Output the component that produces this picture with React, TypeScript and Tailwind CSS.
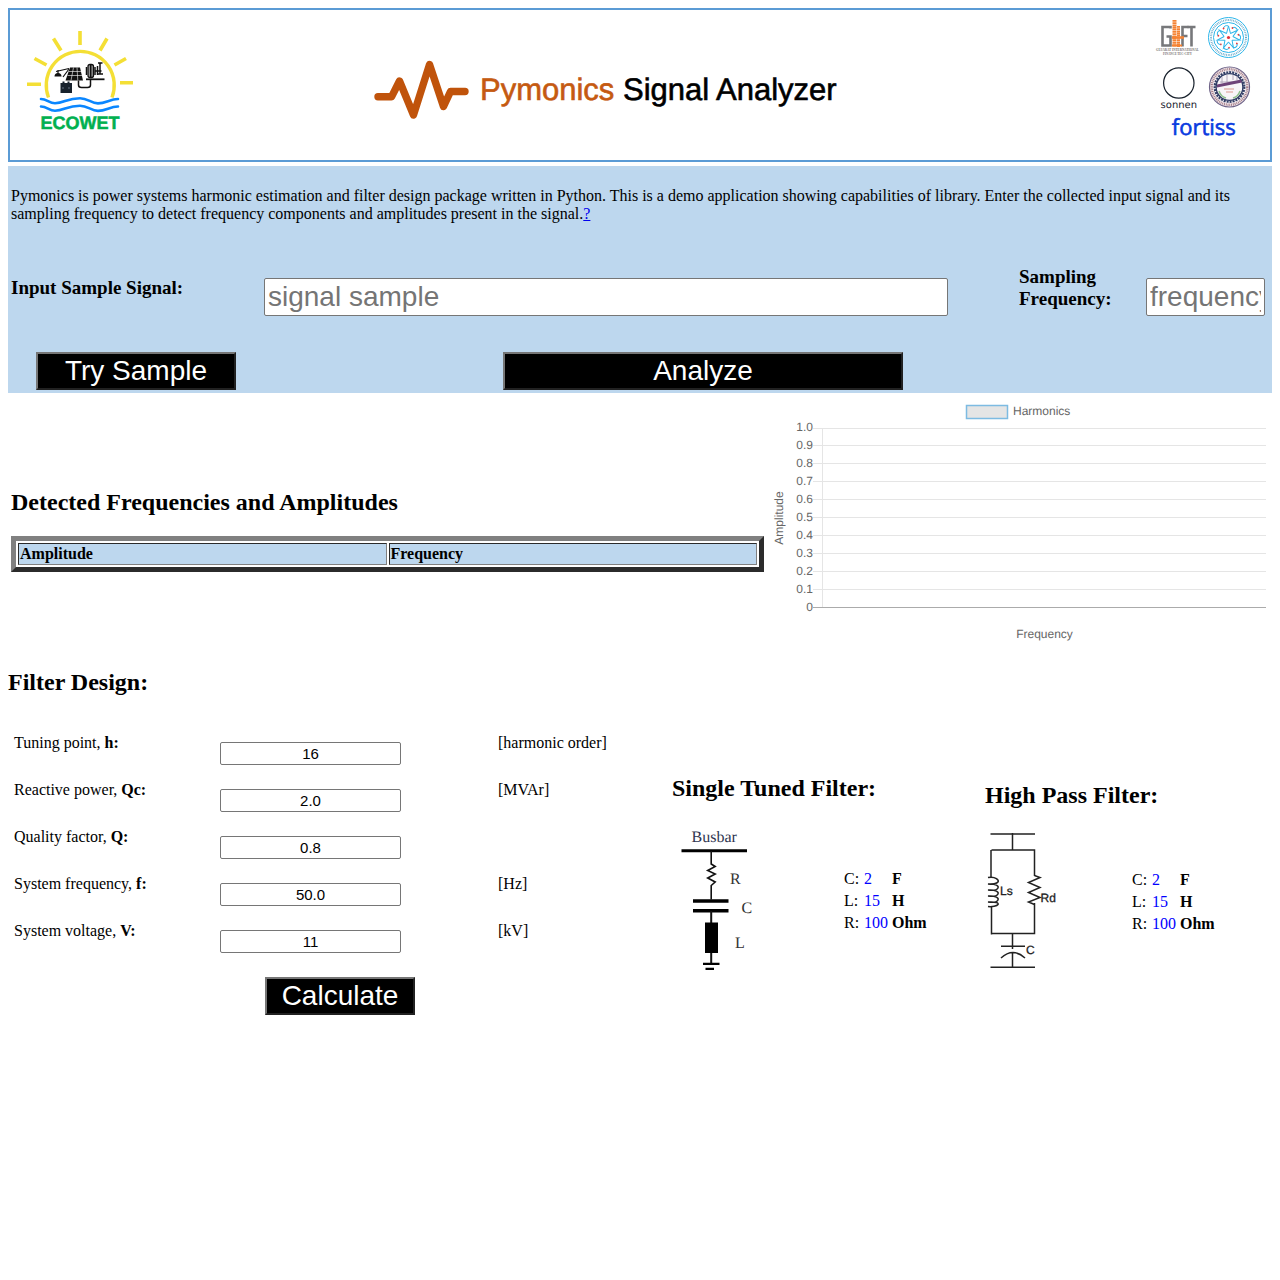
import React from "react";

const serif = "font-['Liberation_Serif',serif]";
const sans = "font-['Liberation_Sans',sans-serif]";

const buttonClass =
  "h-[38px] border-2 border-t-[#767676] border-l-[#767676] border-r-[#212121] border-b-[#212121] bg-black text-center font-['Liberation_Sans',sans-serif] text-[28px] leading-[32px] text-white";
const bigInputClass =
  "h-[38px] w-full rounded-[2px] border border-[#767676] bg-white px-[3px] font-['Liberation_Sans',sans-serif] text-[28px] leading-[32px] text-black placeholder:text-[#757575]";

function EcowetLogo() {
  return (
    <svg width="112" height="106" viewBox="24 26 112 106" role="img" aria-label="Ecowet">
      <g fill="none" stroke="#f4df35" strokeWidth="3.6">
        <path d="M80 31v14M53.5 38.500l7.500 12M107 38.500l-7 12M34.500 58.500l12 6.500M126 58.500l-11.500 6.500M27 84.300h14M120 82.700h13" />
        <path d="M48.500 97.500A34 34 0 1 1 112 97.500" strokeWidth="3.400" />
      </g>
      <g fill="none" stroke="#0a86ff" strokeWidth="2.600" strokeLinecap="round">
        <path d="M41 99c6 0 8 4.200 14 4.200 9 0 12-5 25-5 8 0 11 5.200 18 5.200 8 0 12-4.400 20-4.400" />
        <path d="M41 106.500c6 0 8 4.200 14 4.200 9 0 12-5 25-5 8 0 11 5.200 18 5.200 8 0 12-4.400 20-4.400" />
      </g>
      <path d="M70 67.500h10l3 13H65.500z" fill="#111" />
      <path d="M68.800 71.500h13M67.500 75.500h15M73.500 67.500l-2.500 13M77 67.500l.8 13" stroke="#fff" strokeWidth=".6" />
      <path d="M56 71.500l13-3M58 70v4M69 69l-6 8" fill="none" stroke="#111" strokeWidth="1.200" />
      <path d="M54.500 76.500a3.500 3.500 0 0 1 7 0z" fill="#111" />
      <path d="M60.500 83h2v-1.500h2V83h3v-1.500h2V83h2.500v10H60.500z" fill="#17222d" />
      <path d="M62 88h2m4 0h2" stroke="#9ab" strokeWidth=".6" />
      <path d="M78.500 80.500V85q0 2.500 3 2.500h6q3 0 3-2.500v-5.500" fill="none" stroke="#111" strokeWidth="1.500" />
      <path d="M86 79.300h18.500" stroke="#111" strokeWidth="1.800" />
      <rect x="88" y="64.500" width="5.500" height="13" rx="2" fill="#999" stroke="#111" strokeWidth="1.300" />
      <path d="M86.500 67v8M90.700 65v12M95 67v8M95.500 71h6M97.500 66v9M100 62.500v11.500M98 63h4.500M97 74h6" fill="none" stroke="#111" strokeWidth="1.500" />
      <text x="40.500" y="128.500" fontSize="18" fontWeight="700" fill="#00b050" stroke="#00b050" strokeWidth=".5" textRendering="geometricPrecision" className={sans}>
        ECOWET
      </text>
    </svg>
  );
}

function PymonicsLogo() {
  return (
    <svg width="468" height="68" viewBox="372 56 468 68" role="img" aria-label="Pymonics Signal Analyzer">
      <path
        d="M378 96.800h13.500l8-15.800 14 34 16-50.500 14 42 7-15H465"
        fill="none"
        stroke="#c0530b"
        strokeWidth="7.400"
        strokeLinecap="round"
        strokeLinejoin="round"
      />
      <text x="480" y="100" fontSize="31" strokeWidth=".6" textRendering="geometricPrecision" className={sans}>
        <tspan fill="#c55a11" stroke="#c55a11">Pymonics</tspan>
        <tspan fill="#000" stroke="#000"> Signal Analyzer</tspan>
      </text>
    </svg>
  );
}

function PartnerLogos() {
  const spokes = [0, 51.43, 102.86, 154.29, 205.71, 257.14, 308.57];
  return (
    <svg width="102" height="132" viewBox="1152 14 102 132" role="img" aria-label="Partners">
      <g fill="none" stroke="#77787b" strokeWidth="2.600">
        <path d="M1170.500 28.500v-1.500h-8v18.500h8v-9h-4" />
        <path d="M1182.500 46.500V27h6M1182.500 36h5" />
        <path d="M1187.500 27h8M1191.500 27v19.500" />
      </g>
      <g stroke="#f58233" fill="none">
        <path d="M1174.500 20v27" strokeWidth="4" strokeDasharray="1.800 .4" />
        <path d="M1178.500 26v21" strokeWidth="3" strokeDasharray="1.800 .4" />
        <path d="M1172 37.500h12" strokeWidth="2.500" />
        <path d="M1172 45.500h10" strokeWidth="2" />
      </g>
      <g fill="#77706e" fontWeight="700" textAnchor="middle" className={serif}>
        <text x="1177.500" y="51.300" fontSize="3.200">GUJARAT INTERNATIONAL</text>
        <text x="1177.500" y="55" fontSize="3">FINANCE TEC-CITY</text>
      </g>

      <g fill="none" stroke="#2bb5ea">
        <circle cx="1228.500" cy="37.500" r="20" strokeWidth="1" />
        <circle cx="1228.500" cy="37.500" r="17.500" strokeWidth="2" strokeDasharray=".8 .9" stroke="#68a9c9" />
        <circle cx="1228.500" cy="37.500" r="15" strokeWidth="1" />
        {spokes.map((a) => (
          <g key={a} transform={`rotate(${a} 1228.5 37.5)`}>
            <path d="M1226.500 33.500l2-7.500 2 7.500M1228.500 26c-2.500-1-4.500 0-5 2" strokeWidth="1" />
            <circle cx="1232.500" cy="28" r=".9" fill="#e33" stroke="none" />
          </g>
        ))}
      </g>
      <circle cx="1228.500" cy="37.500" r="1.600" fill="#e5303a" />

      <circle cx="1178.800" cy="83" r="15.200" fill="none" stroke="#17202b" strokeWidth="1.200" />
      <text x="1178.800" y="107.800" fontSize="10" textAnchor="middle" fill="#17202b" fontFamily="DejaVu Sans, sans-serif" textRendering="geometricPrecision">
        sonnen
      </text>

      <circle cx="1229.500" cy="87" r="20" fill="#f5eff2" stroke="#6d6287" strokeWidth="1.200" />
      <circle cx="1229.500" cy="87" r="17.800" fill="none" stroke="#a77f8a" strokeWidth="2.400" strokeDasharray="1 .8" />
      <circle cx="1229.500" cy="87" r="14.800" fill="#fff" stroke="#323e66" strokeWidth="2.200" strokeDasharray="2 1" />
      <circle cx="1229.500" cy="87" r="13.400" fill="#f8f5f8" stroke="#323e66" strokeWidth="1.400" />
      <path d="M1222 77v6m5-8v7m6-7v5m4-4v4M1220 82h17" stroke="#aaa0b4" strokeWidth=".9" />
      <path d="M1217 84.500l24-5 1 3-25 5z" fill="#6e4379" />
      <path d="M1224 89h10M1226 92h7" stroke="#d99a90" strokeWidth="1.200" />
      <path d="M1219 91q2 6 7 7M1240 91q-2 6-7 7" fill="none" stroke="#8dbf8b" strokeWidth="1.500" />

      <text
        x="1203.800"
        y="135.300"
        fontSize="22"
        textAnchor="middle"
        fill="#0a3be0"
        stroke="#0a3be0"
        strokeWidth=".6"
        fontFamily="Open Sans, sans-serif"
        textRendering="geometricPrecision"
      >
        fortiss
      </text>
    </svg>
  );
}

const ticks = [
  { label: "1.0", y: 428 },
  { label: "0.9", y: 445 },
  { label: "0.8", y: 463 },
  { label: "0.7", y: 481 },
  { label: "0.6", y: 499 },
  { label: "0.5", y: 517 },
  { label: "0.4", y: 535 },
  { label: "0.3", y: 553 },
  { label: "0.2", y: 571 },
  { label: "0.1", y: 589 },
  { label: "0", y: 607 },
];

function HarmonicsChart() {
  return (
    <svg viewBox="766 393 506 254" className={`block w-full ${sans}`} fontSize="12" fill="#666" textRendering="geometricPrecision" role="img" aria-label="Harmonics chart">
      <rect x="966.500" y="405.500" width="41" height="13" fill="#e5e5e5" />
      <rect x="966.500" y="405.500" width="41" height="13" fill="none" stroke="#7dbbe2" strokeWidth="1.500" />
      <text x="1013" y="415">Harmonics</text>
      {ticks.map((t) => (
        <g key={t.label}>
          <rect x="813" y={t.y} width="453" height="1" fill={t.label === "0" ? "#ababab" : "#e5e5e5"} />
          <text x="813" y={t.label === "1.0" ? 431 : t.y + 4} textAnchor="end">
            {t.label}
          </text>
        </g>
      ))}
      <rect x="822" y="428" width="1" height="179" fill="#e5e5e5" />
      <text x="1044.500" y="638" textAnchor="middle">Frequency</text>
      <text x="783" y="518" textAnchor="middle" transform="rotate(-90 783 518)">Amplitude</text>
    </svg>
  );
}

function SingleTunedDiagram() {
  return (
    <svg width="90" height="152" viewBox="672 825 90 152" role="img" aria-label="Single tuned filter circuit">
      <g fill="#333" textRendering="geometricPrecision" className={serif}>
        <text x="691.500" y="841.500" fontSize="16" fill="#2f3550">Busbar</text>
        <text x="730" y="883.500" fontSize="16">R</text>
        <text x="741.500" y="913" fontSize="16">C</text>
        <text x="735" y="948" fontSize="16">L</text>
      </g>
      <g fill="none" stroke="#111">
        <path d="M681.500 850.700h65.500" strokeWidth="3" stroke="#000" />
        <path d="M711.200 851v13l4 2.500-7.500 4 7.500 3.500-7.500 4 7.500 4-4 3.500v14" strokeWidth="1.600" />
        <path d="M693 901h35.500M693 910.800h35.500" strokeWidth="3.400" stroke="#000" />
        <path d="M711.200 911v13M711.200 952v12" strokeWidth="2" />
        <path d="M703 963.800h16.500M705.500 968.800h8.500" strokeWidth="2.200" stroke="#000" />
      </g>
      <rect x="705" y="922.500" width="13" height="30.500" fill="#000" />
    </svg>
  );
}

function HighPassDiagram() {
  return (
    <svg width="76" height="146" viewBox="985 829 76 146" role="img" aria-label="High pass filter circuit">
      <g fill="none" stroke="#222" strokeWidth="1.500">
        <path d="M990.500 834h44.500M1012.500 833v17M991.500 850h43v26M991 850v27" />
        <path d="M988 877.500c8-1.500 11 3 10 4.500s-6 2.500-10 2c8-.5 11 2 10 4s-6 2.500-10 2c8-.5 11 2 10 4s-6 2.500-10 2c8-.5 11 2 10 4s-6 2.500-10 2c8-.5 11 1 10 2.500s-6 2.500-10 2" />
        <path d="M991.500 906v28.500M991.500 933.500h43V903" />
        <path d="M1034.500 875.500l5.500 2-11.500 5 11.500 5-11.500 5 11.500 5-11.500 4.500 6 2.500" />
        <path d="M1012.500 934v15M1001 946.300h24M1001 958q12-11 24 0M1012.500 952v15.500M990.500 967.300h44.500" />
      </g>
      <g fill="#222" stroke="#222" strokeWidth=".3" fontSize="12" textRendering="geometricPrecision" className={sans}>
        <text x="1000" y="895">Ls</text>
        <text x="1040.500" y="902">Rd</text>
        <text x="1026" y="953.500">C</text>
      </g>
    </svg>
  );
}

function ResultTable() {
  const rows = [
    { name: "C:", value: "2", unit: "F" },
    { name: "L:", value: "15", unit: "H" },
    { name: "R:", value: "100", unit: "Ohm" },
  ];
  return (
    <table className="border-separate border-spacing-0 text-left">
      <tbody>
        {rows.map((r) => (
          <tr key={r.name} className="h-[22px]">
            <th scope="row" className="w-5 p-0 font-normal">{r.name}</th>
            <td className="w-7 p-0 text-[#0000ff]">{r.value}</td>
            <td className="p-0 font-bold">{r.unit}</td>
          </tr>
        ))}
      </tbody>
    </table>
  );
}

const fields = [
  { id: "h", name: "Tuning point,", symbol: "h:", value: "16", unit: "[harmonic order]" },
  { id: "qc", name: "Reactive power,", symbol: "Qc:", value: "2.0", unit: "[MVAr]" },
  { id: "q", name: "Quality factor,", symbol: "Q:", value: "0.8", unit: "" },
  { id: "f", name: "System frequency,", symbol: "f:", value: "50.0", unit: "[Hz]" },
  { id: "v", name: "System voltage,", symbol: "V:", value: "11", unit: "[kV]" },
];

export default function App() {
  return (
    <div className="bg-white p-2 font-['Liberation_Serif',serif] text-[16px] leading-[18px] text-black">
      <header className="mb-1 flex items-start border-2 border-[#5b9bd5] pt-1 pr-4 pb-3.5 pl-3.5">
        <div className="mt-3">
          <EcowetLogo />
        </div>
        <h1 className="flex flex-1 justify-center self-center pt-5 pr-19">
          <PymonicsLogo />
        </h1>
        <PartnerLogos />
      </header>

      <section className="bg-[#bdd7ee] px-[3px] pt-[21px] pb-[3px]">
        <p>
          Pymonics is power systems harmonic estimation and filter design package written in Python. This is a demo
          application showing capabilities of library. Enter the collected input signal and its sampling frequency to
          detect frequency components and amplitudes present in the signal.
          <a href="#help" className="text-[#0000ee] underline">?</a>
        </p>
        <div className="mt-[43px] grid grid-cols-[253fr_755fr_127fr_123fr] items-start">
          <label htmlFor="signal" className="pt-[11px] text-[19px] leading-[22px] font-bold">
            Input Sample Signal:
          </label>
          <div className="min-w-0 pt-3 pr-[71px]">
            <input id="signal" type="text" placeholder="signal sample" className={bigInputClass} />
          </div>
          <label htmlFor="frequency" className="text-[19px] leading-[22px] font-bold">
            Sampling
            <br />
            Frequency:
          </label>
          <div className="min-w-0 pt-3 pr-1">
            <input id="frequency" type="text" placeholder="frequency" className={bigInputClass} />
          </div>
        </div>
        <div className="mt-9 grid grid-cols-[253fr_882fr_123fr]">
          <div className="flex justify-center pr-[3px]">
            <button type="button" className={`${buttonClass} w-[200px]`}>Try Sample</button>
          </div>
          <div className="flex justify-center pr-1">
            <button type="button" className={`${buttonClass} w-[400px]`}>Analyze</button>
          </div>
        </div>
      </section>

      <section className="grid grid-cols-[758fr_506fr] items-center">
        <div className="pt-[21px] pr-0.5 pl-[3px]">
          <h2 className="mb-5 text-[24px] leading-[27px] font-bold">Detected Frequencies and Amplitudes</h2>
          <table className="w-full table-fixed border-separate border-spacing-[2px] border-[5px] border-t-[#808080] border-r-[#2b2b2b] border-b-[#2b2b2b] border-l-[#808080] text-left">
            <thead>
              <tr className="bg-[#bdd7ee]">
                <th scope="col" className="border border-t-[#2b2b2b] border-r-[#808080] border-b-[#808080] border-l-[#2b2b2b] p-px">Amplitude</th>
                <th scope="col" className="border border-t-[#2b2b2b] border-r-[#808080] border-b-[#808080] border-l-[#2b2b2b] p-px">Frequency</th>
              </tr>
            </thead>
          </table>
        </div>
        <HarmonicsChart />
      </section>

      <h2 className="mt-[22px] text-[24px] leading-[27px] font-bold">Filter Design:</h2>

      <section className="mt-[38px] grid grid-cols-[664fr_313fr_287fr] items-start">
        <form className="pl-1.5">
          {fields.map((f) => (
            <div key={f.id} className="grid h-[47px] grid-cols-[206fr_278fr_174fr] items-start">
              <label htmlFor={f.id}>
                {f.name} <b>{f.symbol}</b>
              </label>
              <input
                id={f.id}
                type="text"
                defaultValue={f.value}
                className="mt-2 h-[23px] w-[181px] rounded-[2px] border border-[#767676] bg-white text-center font-['Liberation_Sans',sans-serif] text-[15px] leading-[17px]"
              />
              <span>{f.unit}</span>
            </div>
          ))}
          <div className="flex justify-center pt-2 pr-1.5">
            <button type="button" className={`${buttonClass} w-[150px]`}>Calculate</button>
          </div>
        </form>

        <div className="pt-[41px]">
          <h2 className="text-[24px] leading-[27px] font-bold">Single Tuned Filter:</h2>
          <div className="mt-[23px] flex items-center gap-[82px]">
            <SingleTunedDiagram />
            <ResultTable />
          </div>
        </div>

        <div className="pt-12">
          <h2 className="text-[24px] leading-[27px] font-bold">High Pass Filter:</h2>
          <div className="mt-5 flex items-center gap-[71px]">
            <HighPassDiagram />
            <ResultTable />
          </div>
        </div>
      </section>
    </div>
  );
}
